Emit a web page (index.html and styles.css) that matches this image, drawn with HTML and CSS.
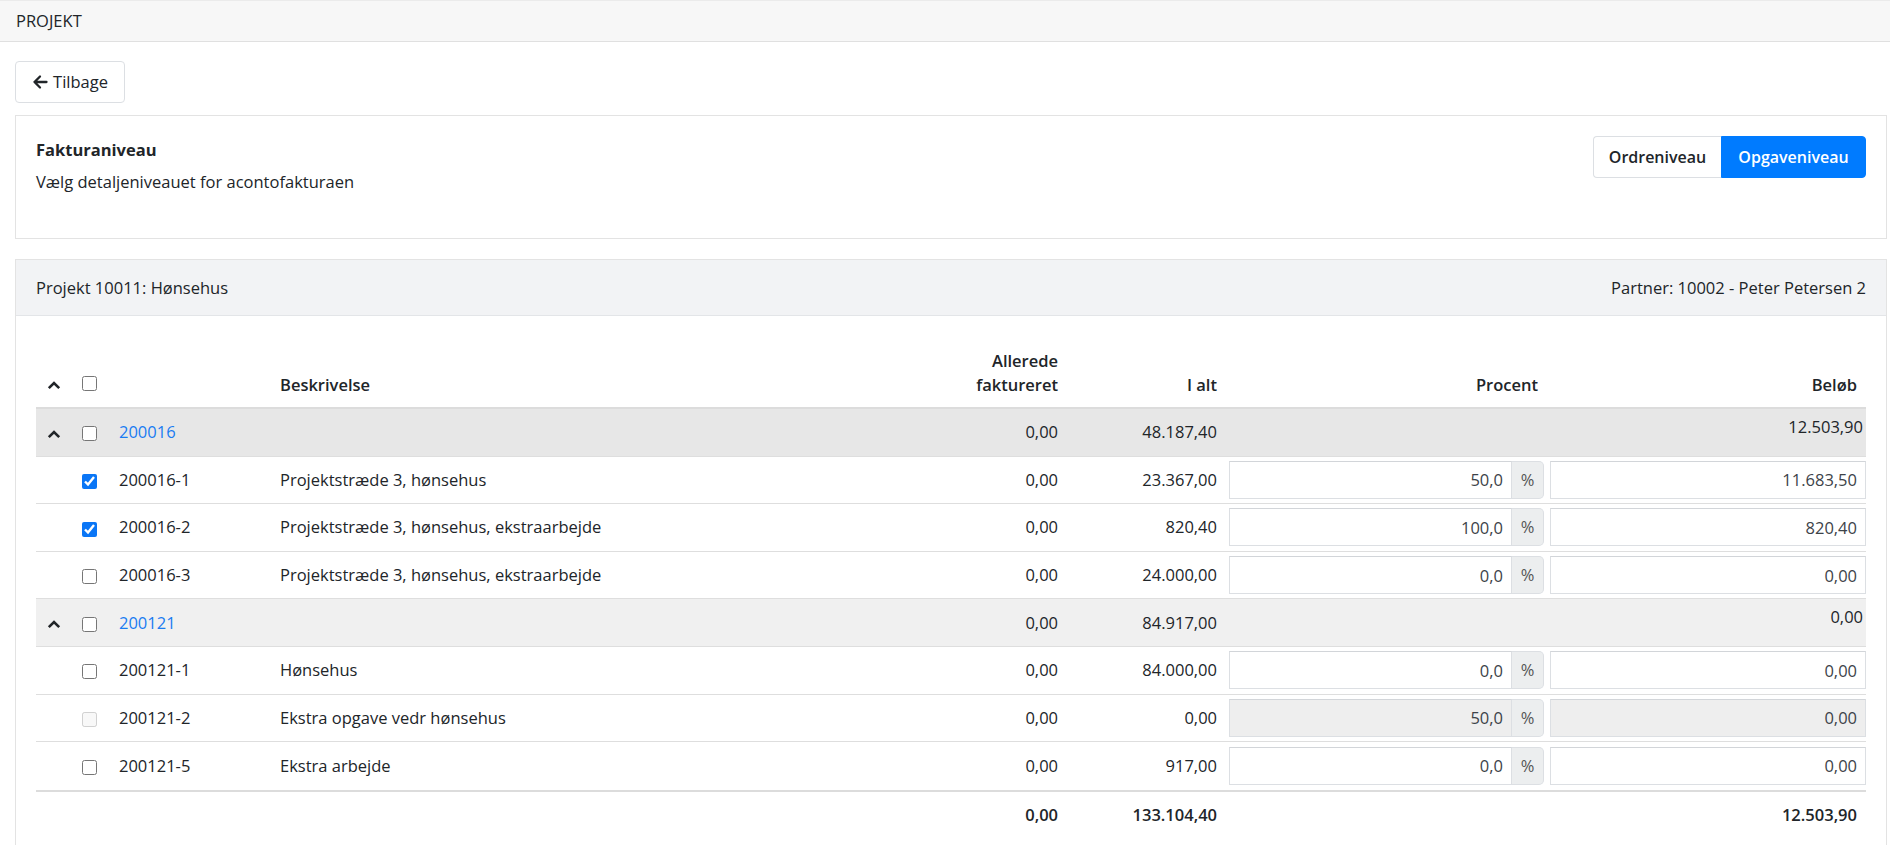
FILE: index.html
```html
<!DOCTYPE html>
<html lang="da">
<head>
<meta charset="utf-8">
<title>Projekt</title>
<link rel="stylesheet" href="styles.css">
</head>
<body>
<div class="topbar">PROJEKT</div>
<div class="page">
  <button class="btn-back" type="button">
    <svg class="arrow" width="16" height="16" viewBox="0 0 16 16"><path d="M14.5 8H2.5M8 2.5L2.5 8L8 13.5" fill="none" stroke="#212529" stroke-width="2.3" stroke-linecap="round" stroke-linejoin="round"/></svg>
    <span>Tilbage</span>
  </button>

  <div class="card level-card">
    <div class="level-text">
      <div class="level-title">Fakturaniveau</div>
      <div class="level-desc">Vælg detaljeniveauet for acontofakturaen</div>
    </div>
    <div class="toggle">
      <button class="tg tg-left" type="button">Ordreniveau</button>
      <button class="tg tg-right active" type="button">Opgaveniveau</button>
    </div>
  </div>

  <div class="card project-card">
    <div class="card-header">
      <span>Projekt 10011: Hønsehus</span>
      <span>Partner: 10002 - Peter Petersen 2</span>
    </div>
    <div class="card-body">
      <table class="grid">
        <colgroup>
          <col class="c-chev"><col class="c-chk"><col class="c-no"><col class="c-desc"><col class="c-inv"><col class="c-tot"><col class="c-pct"><col class="c-amt">
        </colgroup>
        <thead>
          <tr>
            <th class="center"><svg class="chev" width="14" height="10" viewBox="0 0 14 10"><path d="M1.8 8.2L7 3L12.2 8.2" fill="none" stroke="#212529" stroke-width="2.6"/></svg></th>
            <th class="center"><input type="checkbox" class="cb"></th>
            <th></th>
            <th class="left">Beskrivelse</th>
            <th class="num">Allerede<br>faktureret</th>
            <th class="num">I alt</th>
            <th class="num">Procent</th>
            <th class="num">Beløb</th>
          </tr>
        </thead>
        <tbody>
          <tr class="group g1">
            <td class="center"><svg class="chev" width="14" height="10" viewBox="0 0 14 10"><path d="M1.8 8.2L7 3L12.2 8.2" fill="none" stroke="#212529" stroke-width="2.6"/></svg></td>
            <td class="center"><input type="checkbox" class="cb"></td>
            <td><a class="link" href="#">200016</a></td>
            <td></td>
            <td class="num">0,00</td>
            <td class="num">48.187,40</td>
            <td></td>
            <td class="num gamt">12.503,90</td>
          </tr>
          <tr>
            <td></td>
            <td class="center"><input type="checkbox" class="cb" checked></td>
            <td>200016-1</td>
            <td>Projektstræde 3, hønsehus</td>
            <td class="num">0,00</td>
            <td class="num">23.367,00</td>
            <td class="in-pct"><div class="igroup"><input class="inp" type="text" value="50,0"><span class="addon">%</span></div></td>
            <td class="in-amt"><input class="inp full" type="text" value="11.683,50"></td>
          </tr>
          <tr>
            <td></td>
            <td class="center"><input type="checkbox" class="cb" checked></td>
            <td>200016-2</td>
            <td>Projektstræde 3, hønsehus, ekstraarbejde</td>
            <td class="num">0,00</td>
            <td class="num">820,40</td>
            <td class="in-pct"><div class="igroup"><input class="inp" type="text" value="100,0"><span class="addon">%</span></div></td>
            <td class="in-amt"><input class="inp full" type="text" value="820,40"></td>
          </tr>
          <tr>
            <td></td>
            <td class="center"><input type="checkbox" class="cb"></td>
            <td>200016-3</td>
            <td>Projektstræde 3, hønsehus, ekstraarbejde</td>
            <td class="num">0,00</td>
            <td class="num">24.000,00</td>
            <td class="in-pct"><div class="igroup"><input class="inp" type="text" value="0,0"><span class="addon">%</span></div></td>
            <td class="in-amt"><input class="inp full" type="text" value="0,00"></td>
          </tr>
          <tr class="group g2">
            <td class="center"><svg class="chev" width="14" height="10" viewBox="0 0 14 10"><path d="M1.8 8.2L7 3L12.2 8.2" fill="none" stroke="#212529" stroke-width="2.6"/></svg></td>
            <td class="center"><input type="checkbox" class="cb"></td>
            <td><a class="link" href="#">200121</a></td>
            <td></td>
            <td class="num">0,00</td>
            <td class="num">84.917,00</td>
            <td></td>
            <td class="num gamt">0,00</td>
          </tr>
          <tr>
            <td></td>
            <td class="center"><input type="checkbox" class="cb"></td>
            <td>200121-1</td>
            <td>Hønsehus</td>
            <td class="num">0,00</td>
            <td class="num">84.000,00</td>
            <td class="in-pct"><div class="igroup"><input class="inp" type="text" value="0,0"><span class="addon">%</span></div></td>
            <td class="in-amt"><input class="inp full" type="text" value="0,00"></td>
          </tr>
          <tr>
            <td></td>
            <td class="center"><input type="checkbox" class="cb" disabled></td>
            <td>200121-2</td>
            <td>Ekstra opgave vedr hønsehus</td>
            <td class="num">0,00</td>
            <td class="num">0,00</td>
            <td class="in-pct"><div class="igroup"><input class="inp" type="text" value="50,0" disabled><span class="addon">%</span></div></td>
            <td class="in-amt"><input class="inp full" type="text" value="0,00" disabled></td>
          </tr>
          <tr>
            <td></td>
            <td class="center"><input type="checkbox" class="cb"></td>
            <td>200121-5</td>
            <td>Ekstra arbejde</td>
            <td class="num">0,00</td>
            <td class="num">917,00</td>
            <td class="in-pct"><div class="igroup"><input class="inp" type="text" value="0,0"><span class="addon">%</span></div></td>
            <td class="in-amt"><input class="inp full" type="text" value="0,00"></td>
          </tr>
        </tbody>
        <tfoot>
          <tr>
            <td></td><td></td><td></td><td></td>
            <td class="num">0,00</td>
            <td class="num">133.104,40</td>
            <td></td>
            <td class="num">12.503,90</td>
          </tr>
        </tfoot>
      </table>
    </div>
  </div>
</div>
</body>
</html>
```
FILE: styles.css
```css
* { box-sizing: border-box; }
html, body { margin: 0; padding: 0; background: #fff; }
body {
  font-family: "Open Sans", "Noto Sans", sans-serif;
  font-size: 16.5px;
  line-height: 24px;
  color: #212529;
  overflow: hidden;
}

.topbar {
  height: 42px;
  background: #f7f7f7;
  border-top: 1px solid #ebebeb;
  border-bottom: 1px solid #e0e0e0;
  padding-left: 16px;
  display: flex;
  align-items: center;
}

.page {
  padding: 19px 0 0 15px;
  width: 1887px;
}

.btn-back {
  height: 42px;
  width: 110px;
  display: inline-flex;
  align-items: center;
  justify-content: center;
  gap: 5px;
  padding: 0;
  border: 1px solid #dcdfe3;
  border-radius: 4px;
  background: #fff;
  font: inherit;
  color: #212529;
}
.btn-back .arrow { display: block; }

.card {
  border: 1px solid #e3e3e3;
  background: #fff;
}

.level-card {
  margin-top: 12px;
  height: 124px;
  padding: 20px 20px;
  display: flex;
  justify-content: space-between;
  align-items: flex-start;
}
.level-title { font-weight: 700; margin-top: 2px; }
.level-desc { margin-top: 8px; }

.toggle { display: flex; height: 42px; }
.tg {
  font: inherit;
  font-size: 16px;
  font-weight: 600;
  height: 42px;
  padding: 0;
  border: 1px solid #dcdfe3;
  background: #fff;
  color: #212529;
}
.tg-left { width: 128px; border-radius: 4px 0 0 4px; border-right: none; }
.tg-right { width: 145px; border-radius: 0 4px 4px 0; }
.tg.active { background: #007bff; border-color: #007bff; color: #fff; }

.project-card { margin-top: 20px; }
.card-header {
  height: 56px;
  background: #f2f3f5;
  border-bottom: 1px solid #e3e5e8;
  padding: 0 20px;
  display: flex;
  align-items: center;
  justify-content: space-between;
}
.card-body { padding: 20px 20px 40px; }

.grid {
  width: 1830px;
  table-layout: fixed;
  border-collapse: separate;
  border-spacing: 0;
}
.c-chev { width: 36px; }
.c-chk { width: 35px; }
.c-no { width: 161px; }
.c-desc { width: 652px; }
.c-inv { width: 150px; }
.c-tot { width: 156px; }
.c-pct { width: 321px; }
.c-amt { width: 319px; }

.grid th {
  font-weight: 600;
  vertical-align: bottom;
  padding: 13px 12px 10px;
  border-bottom: 2px solid #dcdcdc;
  text-align: left;
}
.grid th.num { text-align: right; }
.grid th:nth-child(6) { padding-right: 9px; }
.grid th:nth-child(7), .grid th:nth-child(8) { padding-right: 9px; }
.grid th.center, .grid td.center { text-align: center; padding-left: 0; padding-right: 0; }

.grid tbody tr { height: 47.6px; }
.grid td {
  padding: 0 12px;
  vertical-align: middle;
  border-bottom: 1px solid #dedede;
  white-space: nowrap;
}
.grid tbody tr:last-child td { border-bottom: none; }
.grid td.num { text-align: right; }
.grid td:nth-child(6) { padding-right: 9px; }

.grid .group.g1 td { background: #e7e7e7; }
.grid .group.g2 td { background: #f0f0f0; }
.grid td.gamt { vertical-align: top; padding: 6px 3px 0 0; }

.chev { display: inline-block; vertical-align: middle; }
.grid th .chev { margin-bottom: 4px; }

.cb {
  width: 15px;
  height: 15px;
  margin: 0;
  vertical-align: middle;
  accent-color: #0a76f6;
}
.grid th .cb { margin-bottom: 6px; }

.link { color: #1a7cf2; text-decoration: none; }

.grid td.in-pct { padding: 0 3px; }
.grid td.in-amt { padding: 0 0 0 3px; }

.igroup { display: flex; height: 38px; }
.inp {
  font: inherit;
  color: #3d4349;
  height: 38px;
  border: 1px solid #dcdfe3;
  border-top-color: #d2d5d9;
  background: #fff;
  text-align: right;
  padding: 0 8px;
  min-width: 0;
}
.igroup .inp { flex: 1; border-radius: 0; }
.inp.full { width: 100%; border-radius: 0; display: block; }
.inp:disabled { background: #eeeeee; color: #3d4349; }
.addon {
  width: 32px;
  background: #eceeef;
  border: 1px solid #dcdfe3;
  border-left: none;
  border-radius: 0 5px 5px 0;
  display: flex;
  align-items: center;
  justify-content: center;
  color: #555;
}

.grid tfoot td {
  border-top: 2px solid #dcdcdc;
  border-bottom: none;
  font-weight: 600;
  height: 48px;
}
.grid tfoot td:nth-child(8) { padding-right: 9px; }
```
